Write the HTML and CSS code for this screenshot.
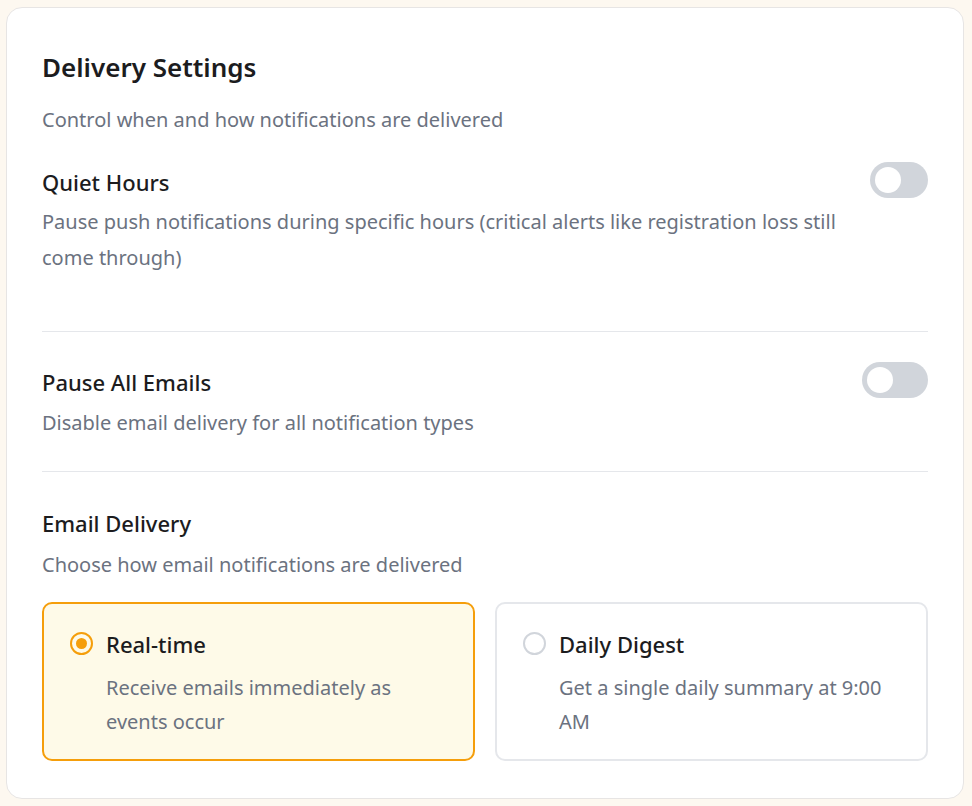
FILE: index.html
```html
<!DOCTYPE html>
<html>
<head>
  <meta charset="UTF-8">
  <title>Delivery Settings</title>
  <meta name="viewport" content="width=device-width, initial-scale=1.0"/>
  <link rel="stylesheet" href="styles.css">
</head>
<body>
  <div class="card">
    <h2 class="card-title">Delivery Settings</h2>
    <p class="card-sub">Control when and how notifications are delivered</p>

    <div class="setting quiet">
      <div class="setting-text">
        <div class="setting-label">Quiet Hours</div>
        <div class="setting-desc">Pause push notifications during specific hours (critical alerts like registration loss still come through)</div>
      </div>
      <button class="toggle" type="button" aria-label="Quiet Hours"><span class="knob"></span></button>
    </div>

    <div class="setting emails">
      <div class="setting-text">
        <div class="setting-label">Pause All Emails</div>
        <div class="setting-desc">Disable email delivery for all notification types</div>
      </div>
      <button class="toggle" type="button" aria-label="Pause All Emails"><span class="knob"></span></button>
    </div>

    <div class="setting delivery">
      <div class="setting-text">
        <div class="setting-label">Email Delivery</div>
        <div class="setting-desc">Choose how email notifications are delivered</div>
      </div>
    </div>

    <div class="options">
      <label class="option selected">
        <span class="radio"></span>
        <span class="option-body">
          <span class="option-title">Real-time</span>
          <span class="option-desc">Receive emails immediately as events occur</span>
        </span>
      </label>
      <label class="option">
        <span class="radio"></span>
        <span class="option-body">
          <span class="option-title">Daily Digest</span>
          <span class="option-desc">Get a single daily summary at 9:00 AM</span>
        </span>
      </label>
    </div>
  </div>
</body>
</html>
```

FILE: styles.css
```css
* { box-sizing: border-box; }
body { margin: 0; padding: 7px 8px 0 6px; background: #fdf8f0; font-family: "Noto Sans", sans-serif; color: #1c1c1e; }

.card { background: #fff; border: 1px solid #e7e5e4; border-radius: 16px; padding: 43px 35px 37px 35px; }
.card-title { margin: 0; font-size: 26px; line-height: 32px; font-weight: 600; }
.card-sub { margin: 19px 0 0; font-size: 20px; line-height: 36px; color: #6b7280; }

.setting { display: flex; align-items: flex-start; gap: 14px; border-bottom: 1px solid #e5e7eb; }
.setting-text { flex: 1; }
.setting-label { font-size: 22px; line-height: 40px; font-weight: 500; }
.setting-desc { margin-top: 2px; font-size: 20px; line-height: 36px; color: #6b7280; }
.quiet { margin-top: 24px; padding-bottom: 55px; }
.emails { padding-top: 30px; padding-bottom: 30px; }
.emails .setting-desc { margin-top: 3px; }
.delivery { border-bottom: none; padding-top: 31px; }
.delivery .setting-desc { margin-top: 4px; }

.toggle { flex: none; width: 66px; height: 36px; border: none; border-radius: 18px; background: #d1d5db; padding: 0 5px; display: flex; align-items: center; cursor: pointer; }
.quiet .toggle { width: 58px; }
.knob { width: 26px; height: 26px; border-radius: 50%; background: #fff; }

.options { display: grid; grid-template-columns: 1fr 1fr; gap: 20px; margin-top: 19px; }
.option { display: flex; gap: 13px; border: 2px solid #e5e7eb; border-radius: 10px; padding: 25px 36px 20px 26px; cursor: pointer; }
.option.selected { border-color: #f59e0b; background: #fefae8; }
.radio { flex: none; width: 23px; height: 23px; margin-top: 3px; border: 2px solid #d1d5db; border-radius: 50%; display: flex; align-items: center; justify-content: center; }
.selected .radio { border-color: #f59e0b; }
.selected .radio::after { content: ""; width: 11px; height: 11px; border-radius: 50%; background: #f59e0b; }
.option-body { display: flex; flex-direction: column; }
.option-title { font-size: 22px; line-height: 30px; font-weight: 500; }
.option-desc { margin-top: 12px; font-size: 20px; line-height: 34px; color: #6b7280; }
```
